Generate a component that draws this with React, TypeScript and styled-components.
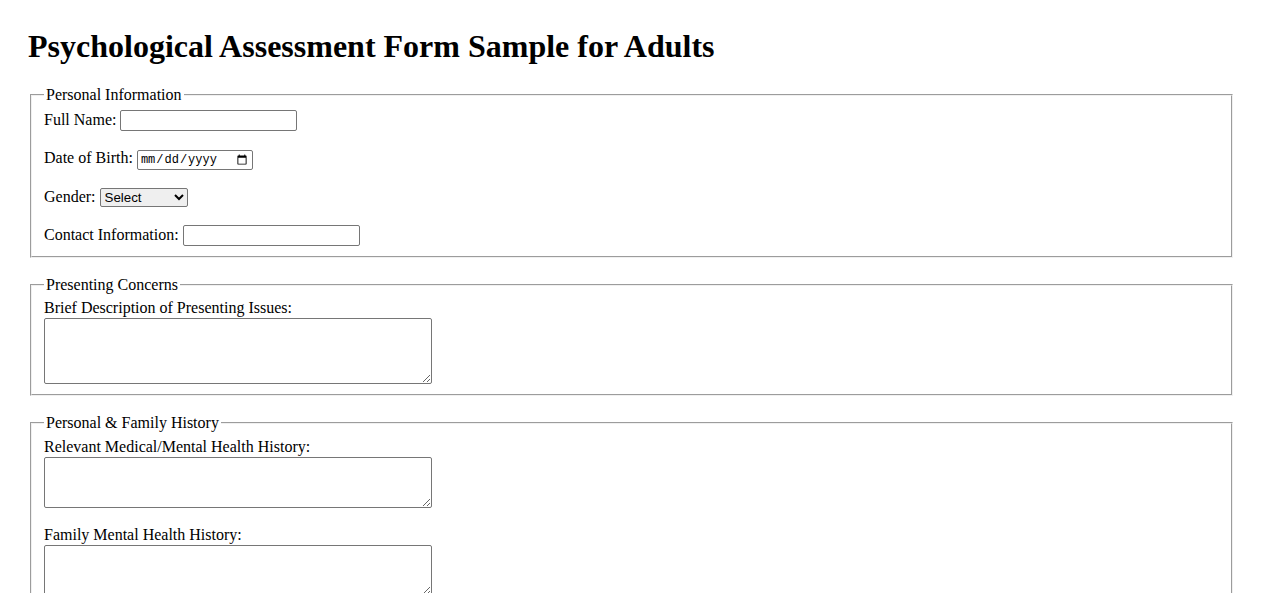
import React from 'react'
import styled, { createGlobalStyle } from 'styled-components'

const GlobalStyle = createGlobalStyle`
  body {
    margin: 0;
    background: #fff;
    color: #000;
    font-family: "Liberation Serif", "Times New Roman", serif;
    font-size: 16px;
  }
`

const Page = styled.div`
  padding: 28px 28px 0;
`

const Title = styled.h1`
  margin: 0 0 21px;
  font-size: 32px;
  font-weight: bold;
  line-height: 37px;
`

const Section = styled.fieldset`
  margin: 0 2px 18px;
  padding: 5.6px 12px 10px;
  border: 2px groove rgb(240, 240, 240);
  min-width: min-content;
`

const Legend = styled.legend`
  padding: 0 2px;
`

const Row = styled.div<{ $last?: boolean }>`
  margin-bottom: ${(p) => (p.$last ? '0' : '18px')};
`

const Label = styled.label`
  display: block;
`

const TextInput = styled.input`
  box-sizing: border-box;
  width: 177px;
  height: 21px;
  font-family: "Liberation Sans", Arial, sans-serif;
  font-size: 13.33px;
  border: 1px solid #767676;
  border-radius: 2px;
  padding: 1px 2px;
`

const DateInput = styled.input`
  box-sizing: border-box;
  width: 116px;
  height: 20px;
  font-family: "Liberation Mono", "Courier New", monospace;
  font-size: 12px;
  border: 1px solid #767676;
  border-radius: 2px;
  padding: 1px 2px;
`

const Select = styled.select`
  box-sizing: border-box;
  width: 88px;
  height: 19px;
  font-family: "Liberation Sans", Arial, sans-serif;
  font-size: 13.33px;
  border: 1px solid #767676;
  border-radius: 2px;
`

const Area = styled.textarea<{ $h: number }>`
  display: block;
  box-sizing: border-box;
  width: 388px;
  height: ${(p) => p.$h}px;
  border: 1px solid #767676;
  border-radius: 2px;
  font-family: "Liberation Mono", monospace;
  font-size: 13.33px;
  padding: 2px;
  margin: 1px 0 0;
`

const AreaRow = styled.div<{ $last?: boolean }>`
  margin-bottom: ${(p) => (p.$last ? '0' : '18px')};
`

export default function App() {
  return (
    <Page>
      <GlobalStyle />
      <Title>Psychological Assessment Form Sample for Adults</Title>

      <Section>
        <Legend>Personal Information</Legend>
        <Row>
          <label htmlFor="name">Full Name:</label> <TextInput id="name" type="text" />
        </Row>
        <Row>
          <label htmlFor="dob">Date of Birth:</label> <DateInput id="dob" type="date" />
        </Row>
        <Row>
          <label htmlFor="gender">Gender:</label>{' '}
          <Select id="gender" defaultValue="">
            <option value="">Select</option>
            <option value="male">Male</option>
            <option value="female">Female</option>
            <option value="other">Other</option>
          </Select>
        </Row>
        <Row $last>
          <label htmlFor="contact">Contact Information:</label> <TextInput id="contact" type="text" />
        </Row>
      </Section>

      <Section>
        <Legend>Presenting Concerns</Legend>
        <AreaRow $last>
          <Label htmlFor="issues">Brief Description of Presenting Issues:</Label>
          <Area id="issues" $h={66} />
        </AreaRow>
      </Section>

      <Section>
        <Legend>Personal &amp; Family History</Legend>
        <AreaRow>
          <Label htmlFor="medical">Relevant Medical/Mental Health History:</Label>
          <Area id="medical" $h={51} />
        </AreaRow>
        <AreaRow $last>
          <Label htmlFor="family">Family Mental Health History:</Label>
          <Area id="family" $h={51} />
        </AreaRow>
      </Section>
    </Page>
  )
}
